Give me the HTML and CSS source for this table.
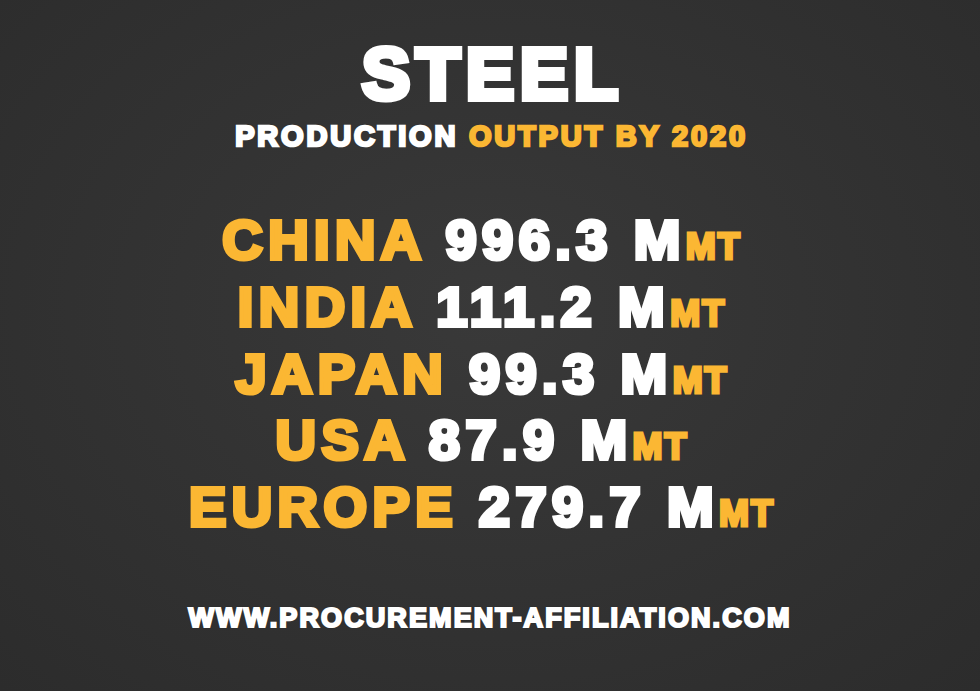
FILE: index.html
```html
<!DOCTYPE html>
<html lang="en">
<head>
    <meta charset="UTF-8">
    <meta name="viewport" content="width=device-width, initial-scale=1.0">
    <title>Steel Production Output by 2020</title>
    <link rel="stylesheet" href="styles.css">
</head>
<body>

    <div class="poster">
        <!-- Heading -->
        <h1 class="title">STEEL</h1>
        <p class="subtitle">PRODUCTION <span class="gold">OUTPUT BY 2020</span></p>

        <!-- Output per region -->
        <ul class="output-list">
            <li><span class="gold">CHINA</span> 996.3 M<span class="unit">MT</span></li>
            <li><span class="gold">INDIA</span> 111.2 M<span class="unit">MT</span></li>
            <li><span class="gold">JAPAN</span> 99.3 M<span class="unit">MT</span></li>
            <li><span class="gold">USA</span> 87.9 M<span class="unit">MT</span></li>
            <li><span class="gold">EUROPE</span> 279.7 M<span class="unit">MT</span></li>
        </ul>

        <p class="site">WWW.PROCUREMENT-AFFILIATION.COM</p>
    </div>

</body>
</html>
```

FILE: styles.css
```css
body {
    margin: 0;
    height: 100vh;
    font-family: "Liberation Sans", Arial, sans-serif;
    font-weight: bold;
    color: #fff;
    background: radial-gradient(ellipse at 50% 45%, #393939 0%, #333 45%, #2c2c2c 100%);
    overflow: hidden;
}

.poster {
    display: flex;
    flex-direction: column;
    align-items: center;
    padding-top: 38px;
}

/* heavier look: stroke in the text colour, thin dark rim */
.poster * {
    text-shadow: 0 0 2px rgba(0, 0, 0, 0.7);
}

.gold {
    color: #fbb733;
}

.title {
    margin: 0;
    padding-left: 6px;
    font-size: 72px;
    line-height: 1;
    letter-spacing: 6px;
    -webkit-text-stroke: 6px currentColor;
}

.subtitle {
    margin: 12px 0 0 0;
    padding-left: 3px;
    font-size: 29px;
    line-height: 1;
    letter-spacing: 2.8px;
    -webkit-text-stroke: 2.6px currentColor;
}

.subtitle .gold {
    -webkit-text-stroke: 2.6px currentColor;
}

.output-list {
    list-style-type: none;
    margin: 56px 0 0 0;
    padding: 0 16px 0 0;
    text-align: center;
}

.output-list li {
    font-size: 56px;
    line-height: 66.75px;
    letter-spacing: 5.4px;
    white-space: nowrap;
    -webkit-text-stroke: 4.2px currentColor;
}

.output-list .gold {
    -webkit-text-stroke: 4.2px currentColor;
}

.unit {
    color: #fbb733;
    font-size: 36px;
    line-height: 0;
    letter-spacing: 2px;
    -webkit-text-stroke: 3px currentColor;
}

.site {
    margin: 64px 0 0 0;
    font-size: 27px;
    line-height: 1;
    letter-spacing: 2.1px;
    -webkit-text-stroke: 2.2px currentColor;
}
```
